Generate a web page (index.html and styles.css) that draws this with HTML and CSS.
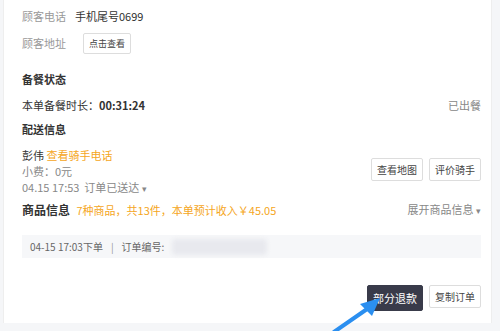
FILE: index.html
```html
<!DOCTYPE html>
<html lang="zh-CN">
<head>
  <meta charset="UTF-8" />
  <meta name="viewport" content="width=device-width, initial-scale=1.0"/>
  <title>订单详情</title>
  <link rel="stylesheet" href="styles.css">
</head>
<body>
  <div class="card">
    <div class="row row-cut">
      <span class="label">首单号码</span>
      <span class="value">18001815151 (备用号码)</span>
    </div>
    <div class="row">
      <span class="label">顾客电话</span>
      <span class="value">手机尾号0699</span>
    </div>
    <div class="row row-addr">
      <span class="label">顾客地址</span>
      <button class="btn btn-small">点击查看</button>
    </div>

    <div class="section">
      <h3 class="title">备餐状态</h3>
      <div class="line-split">
        <span>本单备餐时长：<b class="time">00:31:24</b></span>
        <span class="muted">已出餐</span>
      </div>
    </div>

    <div class="section section-delivery">
      <h3 class="title">配送信息</h3>
      <div class="delivery">
        <div class="delivery-text">
          <div>彭伟 <span class="orange">查看骑手电话</span></div>
          <div class="muted">小费：0元</div>
          <div class="muted">04.15 17:53 &nbsp;订单已送达 <span class="caret">▾</span></div>
        </div>
        <div class="btn-group">
          <button class="btn">查看地图</button>
          <button class="btn">评价骑手</button>
        </div>
      </div>
    </div>

    <div class="goods">
      <div><span class="title-inline">商品信息</span> <span class="orange">7种商品，共13件，本单预计收入￥45.05</span></div>
      <span class="muted">展开商品信息 <span class="caret">▾</span></span>
    </div>

    <div class="order-bar">
      <span>04-15 17:03下单</span>
      <span class="sep">|</span>
      <span>订单编号:</span>
      <span class="blur"></span>
    </div>

    <div class="actions">
      <button class="btn btn-dark">部分退款</button>
      <button class="btn">复制订单</button>
    </div>

    <svg class="arrow" width="60" height="44" viewBox="0 0 60 44">
      <path d="M4 42 L40 17" stroke="#2b8ff0" stroke-width="4" stroke-linecap="round" fill="none"/>
      <polygon points="50,8 30,14 42,26" fill="#2b8ff0"/>
    </svg>
  </div>
</body>
</html>
```

FILE: styles.css
```css
body {
  margin: 0;
  background: #f5f6f8;
  font-family: "Noto Sans CJK SC", "Noto Sans", sans-serif;
  font-size: 11px;
  color: #333;
  overflow: hidden;
  height: 331px;
}

.card {
  position: relative;
  background: #fff;
  margin: -23px 8px 0 3px;
  padding: 0 10px 12px 18px;
  border-left: 1px solid #eee;
  border-right: 1px solid #eee;
}

.row {
  display: flex;
  align-items: center;
  height: 26px;
}

.row-addr {
  height: 28px;
}

.label {
  width: 53px;
  color: #999;
}

.value {
  color: #333;
}

.btn {
  font-family: inherit;
  font-size: 10px;
  color: #444;
  background: #fff;
  border: 1px solid #ddd;
  border-radius: 2px;
  padding: 0 5px;
  height: 23px;
  cursor: pointer;
}

.btn-small {
  height: 21px;
  font-size: 9px;
  margin-left: 8px;
}

.btn-dark {
  background: #393b4a;
  border-color: #393b4a;
  color: #fff;
  height: 26px;
  font-size: 11px;
}

.section {
  margin-top: 14px;
}

.section-delivery {
  margin-top: 8px;
}

.title {
  margin: 0 0 10px;
  font-size: 11px;
  font-weight: bold;
  color: #333;
}

.line-split {
  display: flex;
  justify-content: space-between;
}

.time {
  font-weight: bold;
}

.muted {
  color: #888;
}

.orange {
  color: #f5a623;
}

.caret {
  font-size: 9px;
}

.delivery {
  display: flex;
  justify-content: space-between;
  align-items: center;
}

.delivery-text {
  display: flex;
  flex-direction: column;
  line-height: 16px;
}

.btn-group {
  display: flex;
  gap: 6px;
  margin-top: -6px;
}

.goods {
  display: flex;
  justify-content: space-between;
  margin-top: 4px;
}

.title-inline {
  font-size: 12px;
  font-weight: bold;
  margin-right: 4px;
}

.order-bar {
  display: flex;
  align-items: center;
  gap: 8px;
  background: #f6f7f9;
  height: 23px;
  padding: 0 8px;
  margin-top: 17px;
  color: #666;
  font-size: 10px;
}

.sep {
  color: #999;
}

.blur {
  width: 95px;
  height: 16px;
  background: #e8e9ee;
  border-radius: 4px;
  filter: blur(2px);
}

.actions {
  display: flex;
  justify-content: flex-end;
  gap: 6px;
  margin-top: 27px;
}

.arrow {
  position: absolute;
  left: 326px;
  top: 313px;
}
```
